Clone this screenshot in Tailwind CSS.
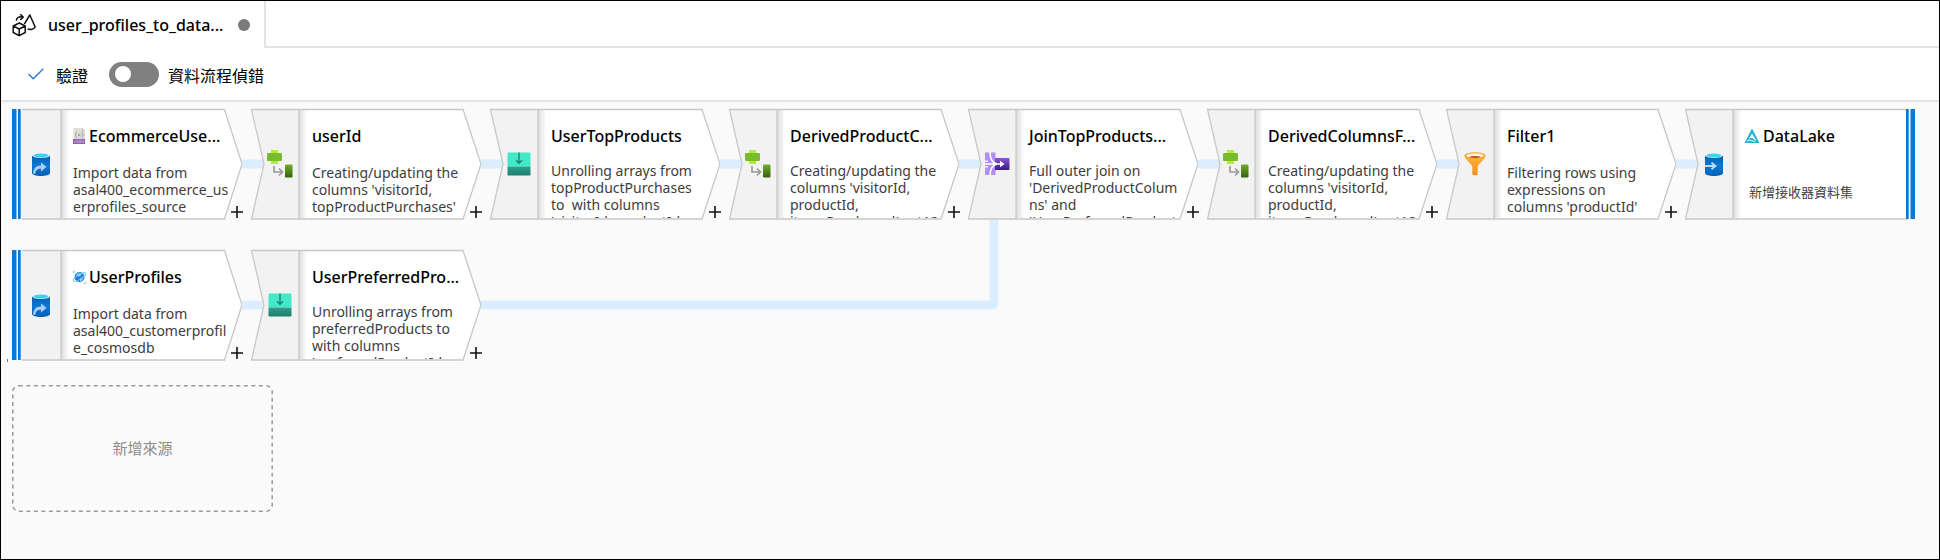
<!DOCTYPE html>
<html lang="zh-Hant">
<head>
<meta charset="utf-8">
<meta name="viewport" content="width=device-width, initial-scale=1">
<title>user_profiles_to_data</title>
<script src="https://cdn.jsdelivr.net/npm/@tailwindcss/browser@4"></script>
</head>
<body class="bg-white font-['Noto_Sans','Noto_Sans_CJK_TC',sans-serif] text-black">

<svg class="absolute h-0 w-0" aria-hidden="true">
  <defs>
    <linearGradient id="blue" x1="0" y1="0" x2="0" y2="1"><stop offset="0" stop-color="#0a5cb0"/><stop offset=".5" stop-color="#0a78d4"/><stop offset="1" stop-color="#0560b6"/></linearGradient>
    <linearGradient id="green" x1="0" y1="0" x2="0" y2="1"><stop offset="0" stop-color="#6fae2a"/><stop offset="1" stop-color="#365f10"/></linearGradient>
    <linearGradient id="teal" x1="0" y1="0" x2="0" y2="1"><stop offset="0" stop-color="#2fa08d"/><stop offset="1" stop-color="#1f7d70"/></linearGradient>
    <linearGradient id="purple" x1="0" y1="0" x2="0" y2="1"><stop offset="0" stop-color="#8a55d8"/><stop offset="1" stop-color="#3b1a80"/></linearGradient>
    <linearGradient id="orange" x1="0" y1="0" x2="0" y2="1"><stop offset="0" stop-color="#ffb43a"/><stop offset="1" stop-color="#f78d1e"/></linearGradient>
    <linearGradient id="shade" x1="0" y1="0" x2="1" y2="0"><stop offset="0" stop-color="#dcdcdc"/><stop offset="1" stop-color="#ffffff"/></linearGradient>
    <linearGradient id="globe" x1="0" y1="0" x2="0" y2="1"><stop offset="0" stop-color="#2f8fe6"/><stop offset="1" stop-color="#1d6fd0"/></linearGradient>
  </defs>

  <symbol id="source-body" viewBox="0 0 230 110" overflow="visible">
    <path d="M1 .5H212.500L230 55 212.500 110H1Z" fill="#fff"/>
    <path d="M1 .5H49V110H1Z" fill="#f2f2f2"/>
    <path d="M49 1H57V109H49Z" fill="url(#shade)"/>
    <path d="M10 .5H212.500L230 55 212.500 110H10M49 .5V110" fill="none" stroke="#c8c8c8" stroke-width="1.300"/>
    <path d="M0 0H8.700V110H0Z" fill="#fff"/>
    <path d="M0 0H4.500V110H0ZM6 0H8.700V110H6Z" fill="#0a78d4"/>
  </symbol>
  <symbol id="step-body" viewBox="0 0 230 110" overflow="visible">
    <path d="M-9 55H13" stroke="#dbeeff" stroke-width="9"/>
    <path d="M.5 .5H212L230 55 212 110H.5L13 55Z" fill="#fff"/>
    <path d="M.5 .5H48V110H.5L13 55Z" fill="#f2f2f2"/>
    <path d="M48 1H56V109H48Z" fill="url(#shade)"/>
    <path d="M.5 .5H212L230 55 212 110H.5L13 55ZM48 .5V110" fill="none" stroke="#c8c8c8" stroke-width="1.300"/>
  </symbol>
  <symbol id="sink-body" viewBox="0 0 230 110" overflow="visible">
    <path d="M-9 55H13" stroke="#dbeeff" stroke-width="9"/>
    <path d="M.5 .5H222V110H.5L13 55Z" fill="#fff"/>
    <path d="M.5 .5H48V110H.5L13 55Z" fill="#f2f2f2"/>
    <path d="M48 1H56V109H48Z" fill="url(#shade)"/>
    <path d="M222 .5H.5L13 55 .5 110H222M48 .5V110" fill="none" stroke="#c8c8c8" stroke-width="1.300"/>
    <path d="M221 0H230V110H221Z" fill="#fff"/>
    <path d="M221 0H223.700V110H221ZM225.500 0H230V110H225.500Z" fill="#0a78d4"/>
  </symbol>

  <symbol id="i-source" viewBox="0 0 24 26">
    <path d="M3 4V22C3 26 21 26 21 22V4Z" fill="url(#blue)"/>
    <ellipse cx="12" cy="4.300" rx="9" ry="2.800" fill="#e8f4fb"/><ellipse cx="12" cy="4.500" rx="7.300" ry="2" fill="#3fd2ee"/>
    <path d="M4 22.500C4.500 17 7 14.800 12 14.500V11.200L17.500 16.100 12 20.500V17.800C8.500 17.700 7 19 6.200 23Z" fill="#a9cdf5"/>
  </symbol>
  <symbol id="i-sink" viewBox="0 0 24 26">
    <path d="M3 4V22C3 26 21 26 21 22V4Z" fill="url(#blue)"/>
    <ellipse cx="12" cy="4.300" rx="9" ry="2.800" fill="#e8f4fb"/><ellipse cx="12" cy="4.500" rx="7.300" ry="2" fill="#3fd2ee"/>
    <path d="M3 15H12.800M9.500 11.800 13.500 15 9.500 18.200" fill="none" stroke="#b9dcfa" stroke-width="1.800"/>
  </symbol>
  <symbol id="i-derive" viewBox="0 0 28 28">
    <path d="M5 0H12V14H5Z" fill="#b4ec36"/>
    <rect x="1" y="3" width="15" height="8" rx="1.200" fill="#76bc2d"/>
    <rect x="19" y="14.500" width="7.500" height="13" rx="1" fill="url(#green)"/>
    <path d="M8 16V22H16M13 18.500 16.500 22 13 25.500" fill="none" stroke="#9b9b9b" stroke-width="1.700"/>
  </symbol>
  <symbol id="i-flatten" viewBox="0 0 28 28">
    <path d="M3.500 2.500H24.500Q25.500 2.500 25.500 3.500V16.500H2.500V3.500Q2.500 2.500 3.500 2.500Z" fill="#43e8c8"/>
    <path d="M2.500 16.500H25.500V24.500Q25.500 25.500 24.500 25.500H3.500Q2.500 25.500 2.500 24.500Z" fill="url(#teal)"/>
    <path d="M14 2.500V13M11 10.300 14 13.300 17 10.300" fill="none" stroke="#1f7d70" stroke-width="1.300"/>
  </symbol>
  <symbol id="i-join" viewBox="0 0 28 28">
    <path d="M2 2.500H12.500V25H2Z" fill="#b28df5"/>
    <path d="M12 8H25.500Q26.500 8 26.500 9V19Q26.500 20 25.500 20H12Z" fill="url(#purple)"/>
    <path d="M1 14H19M7 2C7 9 10 13.500 14.500 14M7 26C7 19 10 14.500 14.500 14" fill="none" stroke="#fff" stroke-width="1.700"/>
    <path d="M1 10.500H5V12H1ZM1 16H5V17.500H1Z" fill="#f2f2f2"/>
    <path d="M17 10.800 21.500 14 17 17.200Z" fill="#fff"/>
  </symbol>
  <symbol id="i-filter" viewBox="0 0 28 28">
    <path d="M3.500 5.500C3.500 10 11.300 14 11.300 17V24Q11.300 25.200 12.500 25.200H15.500Q16.700 25.200 16.700 24V17C16.700 14 24.500 10 24.500 5.500Z" fill="url(#orange)"/>
    <ellipse cx="14" cy="5.500" rx="10.500" ry="3.300" fill="#f9a02c"/>
    <ellipse cx="14" cy="5.600" rx="8.800" ry="2.300" fill="#fff3df"/>
    <path d="M8 7.200C9 5.700 19 5.700 20 7.200 18 8.200 10 8.200 8 7.200Z" fill="#c05a1b"/>
  </symbol>
  <symbol id="i-plus" viewBox="0 0 12 12">
    <path d="M6 0V12M0 6H12" stroke="#111" stroke-width="1.600"/>
  </symbol>
</svg>

<main class="flex min-h-screen flex-col border border-black">
  <header class="flex h-[47px]">
    <button type="button" class="flex w-[265px] shrink-0 items-center border-r-2 border-[#e3e3e3] pl-[11px]">
      <svg class="h-6 w-6 shrink-0" viewBox="0 0 24 24" fill="none" stroke="#111" stroke-width="1.500" stroke-linejoin="round" aria-hidden="true">
        <path d="M1.200 13 7.200 10 13.200 13V19.500L7.200 22.700 1.200 19.500ZM1.200 13 7.200 16 13.200 13M7.200 16V22.700"/>
        <path d="M12.300 11.200 17.800 2 23.200 14C22 16.300 18.500 17 15.600 16"/>
        <path d="M4.300 7.700C4.500 4.500 7 3.300 10.500 4M8.300 1.300 11.200 4.100 8.300 6.900"/>
      </svg>
      <span class="ml-3 text-base font-medium">user_profiles_to_data...</span>
      <span class="ml-[15px] h-3 w-3 rounded-full bg-[#7b7b7b]"></span>
    </button>
    <div class="flex-1 border-b-2 border-[#e3e3e3]"></div>
  </header>

  <div class="flex h-[54px] shrink-0 items-center border-b-2 border-[#e5e5e5] pl-[27px]">
    <button type="button" class="flex items-center gap-3 text-base">
      <svg class="h-3 w-4" viewBox="0 0 16 12" fill="none" stroke="#2b78d6" stroke-width="1.400" aria-hidden="true"><path d="M.5 6 5.300 10.700 15.300.7"/></svg>
      <span class="pt-[3px]">驗證</span>
    </button>
    <label class="ml-[21px] flex items-center gap-[9px] text-base">
      <input type="checkbox" role="switch" class="peer sr-only">
      <span class="flex h-[25px] w-[50px] items-center rounded-full bg-[#808080] pl-[6px]"><span class="h-4 w-4 rounded-full bg-white"></span></span>
      <span class="pt-[3px]">資料流程偵錯</span>
    </label>
  </div>

  <section class="flex flex-1 flex-col overflow-x-auto bg-[#fafafa] pt-[7px] pl-[11px]">
    <div class="flex gap-[9px]">
      <article class="relative flex h-[110px] w-[230px] shrink-0">
        <svg class="absolute inset-0 h-full w-full overflow-visible" aria-hidden="true"><use href="#source-body"/></svg>
        <div class="relative flex w-12 shrink-0 items-center justify-center pl-[10px]"><svg class="h-[26px] w-6" aria-hidden="true"><use href="#i-source"/></svg></div>
        <div class="relative h-[109px] flex-1 overflow-hidden pt-[15px] pl-[13px] whitespace-nowrap">
          <h2 class="flex items-center gap-1 text-base leading-6 font-medium">
            <svg class="h-4 w-3 shrink-0" viewBox="0 0 12 16" aria-hidden="true"><path d="M.5 0H9L12 3V16H.5Z" fill="#deddd6"/><path d="M9 0V3H12Z" fill="#bdbcb5"/><path d="M4 4Q3 4 3 5.500T2 7Q3 7 3 8.500T4 10M8.500 4Q9.500 4 9.500 5.500T10.500 7Q9.500 7 9.500 8.500T8.500 10M5 6 7.500 8M7.500 6 5 8" fill="none" stroke="#a08bb0" stroke-width=".8"/><path d="M0 11H12V16H0Z" fill="#8f62ac"/><path d="M2 12.500V14.500H1M4.500 12.500H3.500V13.500H4.500V14.500H3.500M6 12.500H7.500V14.500H6ZM9 15V12.500L10.500 14.500V12.500" fill="none" stroke="#d9c5e6" stroke-width=".6"/></svg>
            EcommerceUse...
          </h2>
          <p class="mt-4 text-[14px] leading-[17px] text-[#3d3d3d]">Import data from<br>asal400_ecommerce_us<br>erprofiles_source</p>
        </div>
        <button type="button" aria-label="Add step" class="absolute -right-px bottom-px h-3 w-3"><svg class="h-3 w-3"><use href="#i-plus"/></svg></button>
      </article>

      <article class="relative flex h-[110px] w-[230px] shrink-0">
        <svg class="absolute inset-0 h-full w-full overflow-visible" aria-hidden="true"><use href="#step-body"/></svg>
        <div class="relative flex w-12 shrink-0 items-center justify-center pl-[10px]"><svg class="h-7 w-7" aria-hidden="true"><use href="#i-derive"/></svg></div>
        <div class="relative h-[109px] flex-1 overflow-hidden pt-[15px] pl-[13px] whitespace-nowrap">
          <h2 class="text-base leading-6 font-medium">userId</h2>
          <p class="mt-4 text-[14px] leading-[17px] text-[#3d3d3d]">Creating/updating the<br>columns 'visitorId,<br>topProductPurchases'</p>
        </div>
        <button type="button" aria-label="Add step" class="absolute -right-px bottom-px h-3 w-3"><svg class="h-3 w-3"><use href="#i-plus"/></svg></button>
      </article>

      <article class="relative flex h-[110px] w-[230px] shrink-0">
        <svg class="absolute inset-0 h-full w-full overflow-visible" aria-hidden="true"><use href="#step-body"/></svg>
        <div class="relative flex w-12 shrink-0 items-center justify-center pl-[10px]"><svg class="h-7 w-7" aria-hidden="true"><use href="#i-flatten"/></svg></div>
        <div class="relative h-[109px] flex-1 overflow-hidden pt-[15px] pl-[13px] whitespace-nowrap">
          <h2 class="text-base leading-6 font-medium">UserTopProducts</h2>
          <p class="mt-[14px] text-[14px] leading-[17px] whitespace-pre text-[#3d3d3d]">Unrolling arrays from<br>topProductPurchases<br>to  with columns<br>'visitorId, productId,</p>
        </div>
        <button type="button" aria-label="Add step" class="absolute -right-px bottom-px h-3 w-3"><svg class="h-3 w-3"><use href="#i-plus"/></svg></button>
      </article>

      <article class="relative flex h-[110px] w-[230px] shrink-0">
        <svg class="absolute inset-0 h-full w-full overflow-visible" aria-hidden="true"><use href="#step-body"/></svg>
        <div class="relative flex w-12 shrink-0 items-center justify-center pl-[10px]"><svg class="h-7 w-7" aria-hidden="true"><use href="#i-derive"/></svg></div>
        <div class="relative h-[109px] flex-1 overflow-hidden pt-[15px] pl-[13px] whitespace-nowrap">
          <h2 class="text-base leading-6 font-medium">DerivedProductC...</h2>
          <p class="mt-[14px] text-[14px] leading-[17px] text-[#3d3d3d]">Creating/updating the<br>columns 'visitorId,<br>productId,<br>itemsPurchasedLast12</p>
        </div>
        <button type="button" aria-label="Add step" class="absolute -right-px bottom-px h-3 w-3"><svg class="h-3 w-3"><use href="#i-plus"/></svg></button>
      </article>

      <article class="relative flex h-[110px] w-[230px] shrink-0">
        <svg class="absolute inset-0 h-full w-full overflow-visible" aria-hidden="true"><use href="#step-body"/></svg>
        <div class="relative flex w-12 shrink-0 items-center justify-center pl-[10px]"><svg class="h-7 w-7" aria-hidden="true"><use href="#i-join"/></svg></div>
        <div class="relative h-[109px] flex-1 overflow-hidden pt-[15px] pl-[13px] whitespace-nowrap">
          <h2 class="text-base leading-6 font-medium">JoinTopProducts...</h2>
          <p class="mt-[14px] text-[14px] leading-[17px] text-[#3d3d3d]">Full outer join on<br>'DerivedProductColum<br>ns' and<br>'UserPreferredProduct</p>
        </div>
        <button type="button" aria-label="Add step" class="absolute -right-px bottom-px h-3 w-3"><svg class="h-3 w-3"><use href="#i-plus"/></svg></button>
      </article>

      <article class="relative flex h-[110px] w-[230px] shrink-0">
        <svg class="absolute inset-0 h-full w-full overflow-visible" aria-hidden="true"><use href="#step-body"/></svg>
        <div class="relative flex w-12 shrink-0 items-center justify-center pl-[10px]"><svg class="h-7 w-7" aria-hidden="true"><use href="#i-derive"/></svg></div>
        <div class="relative h-[109px] flex-1 overflow-hidden pt-[15px] pl-[13px] whitespace-nowrap">
          <h2 class="text-base leading-6 font-medium">DerivedColumnsF...</h2>
          <p class="mt-[14px] text-[14px] leading-[17px] text-[#3d3d3d]">Creating/updating the<br>columns 'visitorId,<br>productId,<br>itemsPurchasedLast12</p>
        </div>
        <button type="button" aria-label="Add step" class="absolute -right-px bottom-px h-3 w-3"><svg class="h-3 w-3"><use href="#i-plus"/></svg></button>
      </article>

      <article class="relative flex h-[110px] w-[230px] shrink-0">
        <svg class="absolute inset-0 h-full w-full overflow-visible" aria-hidden="true"><use href="#step-body"/></svg>
        <div class="relative flex w-12 shrink-0 items-center justify-center pl-[10px]"><svg class="h-7 w-7" aria-hidden="true"><use href="#i-filter"/></svg></div>
        <div class="relative h-[109px] flex-1 overflow-hidden pt-[15px] pl-[13px] whitespace-nowrap">
          <h2 class="text-base leading-6 font-medium">Filter1</h2>
          <p class="mt-4 text-[14px] leading-[17px] text-[#3d3d3d]">Filtering rows using<br>expressions on<br>columns 'productId'</p>
        </div>
        <button type="button" aria-label="Add step" class="absolute -right-px bottom-px h-3 w-3"><svg class="h-3 w-3"><use href="#i-plus"/></svg></button>
      </article>

      <article class="relative flex h-[110px] w-[230px] shrink-0">
        <svg class="absolute inset-0 h-full w-full overflow-visible" aria-hidden="true"><use href="#sink-body"/></svg>
        <div class="relative flex w-12 shrink-0 items-center justify-center pl-[10px]"><svg class="h-[26px] w-6" aria-hidden="true"><use href="#i-sink"/></svg></div>
        <div class="relative h-[109px] flex-1 overflow-hidden pt-[15px] pl-[11px] whitespace-nowrap">
          <h2 class="flex items-center gap-[3px] text-base leading-6 font-medium">
            <svg class="h-4 w-4 shrink-0" viewBox="0 0 16 16" aria-hidden="true"><path d="M8 .5 15.500 15H.5ZM8 5.500 4.500 11.500Q7 8.500 9 10.500T12.500 13Z" fill="#1fb3cf" fill-rule="evenodd"/><path d="M3 13Q5.500 11.500 7.500 12.500T11 13.500" fill="none" stroke="#fff" stroke-width="1"/></svg>
            DataLake
          </h2>
          <p class="mt-9 pl-[5px] text-[13px] leading-[17px] text-[#3d3d3d]">新增接收器資料集</p>
        </div>
      </article>
    </div>

    <div class="mt-[31px] flex gap-[9px]">
      <article class="relative flex h-[110px] w-[230px] shrink-0">
        <svg class="absolute inset-0 h-full w-full overflow-visible" aria-hidden="true"><use href="#source-body"/><path d="M-4.500 109V112" stroke="#777"/></svg>
        <div class="relative flex w-12 shrink-0 items-center justify-center pl-[10px]"><svg class="h-[26px] w-6" aria-hidden="true"><use href="#i-source"/></svg></div>
        <div class="relative h-[109px] flex-1 overflow-hidden pt-[15px] pl-[13px] whitespace-nowrap">
          <h2 class="flex items-center gap-1 text-base leading-6 font-medium">
            <svg class="h-4 w-3 shrink-0 overflow-visible" viewBox="0 0 12 16" aria-hidden="true"><circle cx="6.500" cy="8" r="5" fill="url(#globe)"/><path d="M3 6Q5 3.500 8 4.500L7.500 7 5 7.500ZM7 9.500 10 8.500 9 11.500 7 12Z" fill="#9fdcfb"/><ellipse cx="6.500" cy="8" rx="7.200" ry="2.200" transform="rotate(-32 6.500 8)" fill="none" stroke="#6cc9f5" stroke-width="1"/><path d="M1 1.500V4.500M-.5 3H2.500M12 12.500V15.500M10.500 14H13.500" stroke="#8ed6f8" stroke-width="1"/></svg>
            UserProfiles
          </h2>
          <p class="mt-4 text-[14px] leading-[17px] text-[#3d3d3d]">Import data from<br>asal400_customerprofil<br>e_cosmosdb</p>
        </div>
        <button type="button" aria-label="Add step" class="absolute -right-px bottom-px h-3 w-3"><svg class="h-3 w-3"><use href="#i-plus"/></svg></button>
      </article>

      <article class="relative flex h-[110px] w-[230px] shrink-0">
        <svg class="absolute inset-0 h-full w-full overflow-visible" aria-hidden="true"><path d="M230 55H741Q743 55 743 53V-30" fill="none" stroke="#dbeeff" stroke-width="9"/><use href="#step-body"/></svg>
        <div class="relative flex w-12 shrink-0 items-center justify-center pl-[10px]"><svg class="h-7 w-7" aria-hidden="true"><use href="#i-flatten"/></svg></div>
        <div class="relative h-[109px] flex-1 overflow-hidden pt-[15px] pl-[13px] whitespace-nowrap">
          <h2 class="text-base leading-6 font-medium">UserPreferredPro...</h2>
          <p class="mt-[14px] text-[14px] leading-[17px] text-[#3d3d3d]">Unrolling arrays from<br>preferredProducts to<br>with columns<br>'preferredProductId,</p>
        </div>
        <button type="button" aria-label="Add step" class="absolute -right-px bottom-px h-3 w-3"><svg class="h-3 w-3"><use href="#i-plus"/></svg></button>
      </article>
    </div>

    <button type="button" class="relative mt-[25px] h-[127px] w-[261px] text-[15px] text-[#8c8c8c]">
      <svg class="absolute inset-0 h-full w-full" viewBox="0 0 261 127" aria-hidden="true"><rect x=".8" y=".8" width="259.400" height="125.400" rx="6" fill="none" stroke="#9a9a9a" stroke-width="1.500" stroke-dasharray="4 3.500"/></svg>
      新增來源
    </button>
  </section>
</main>
</body>
</html>
